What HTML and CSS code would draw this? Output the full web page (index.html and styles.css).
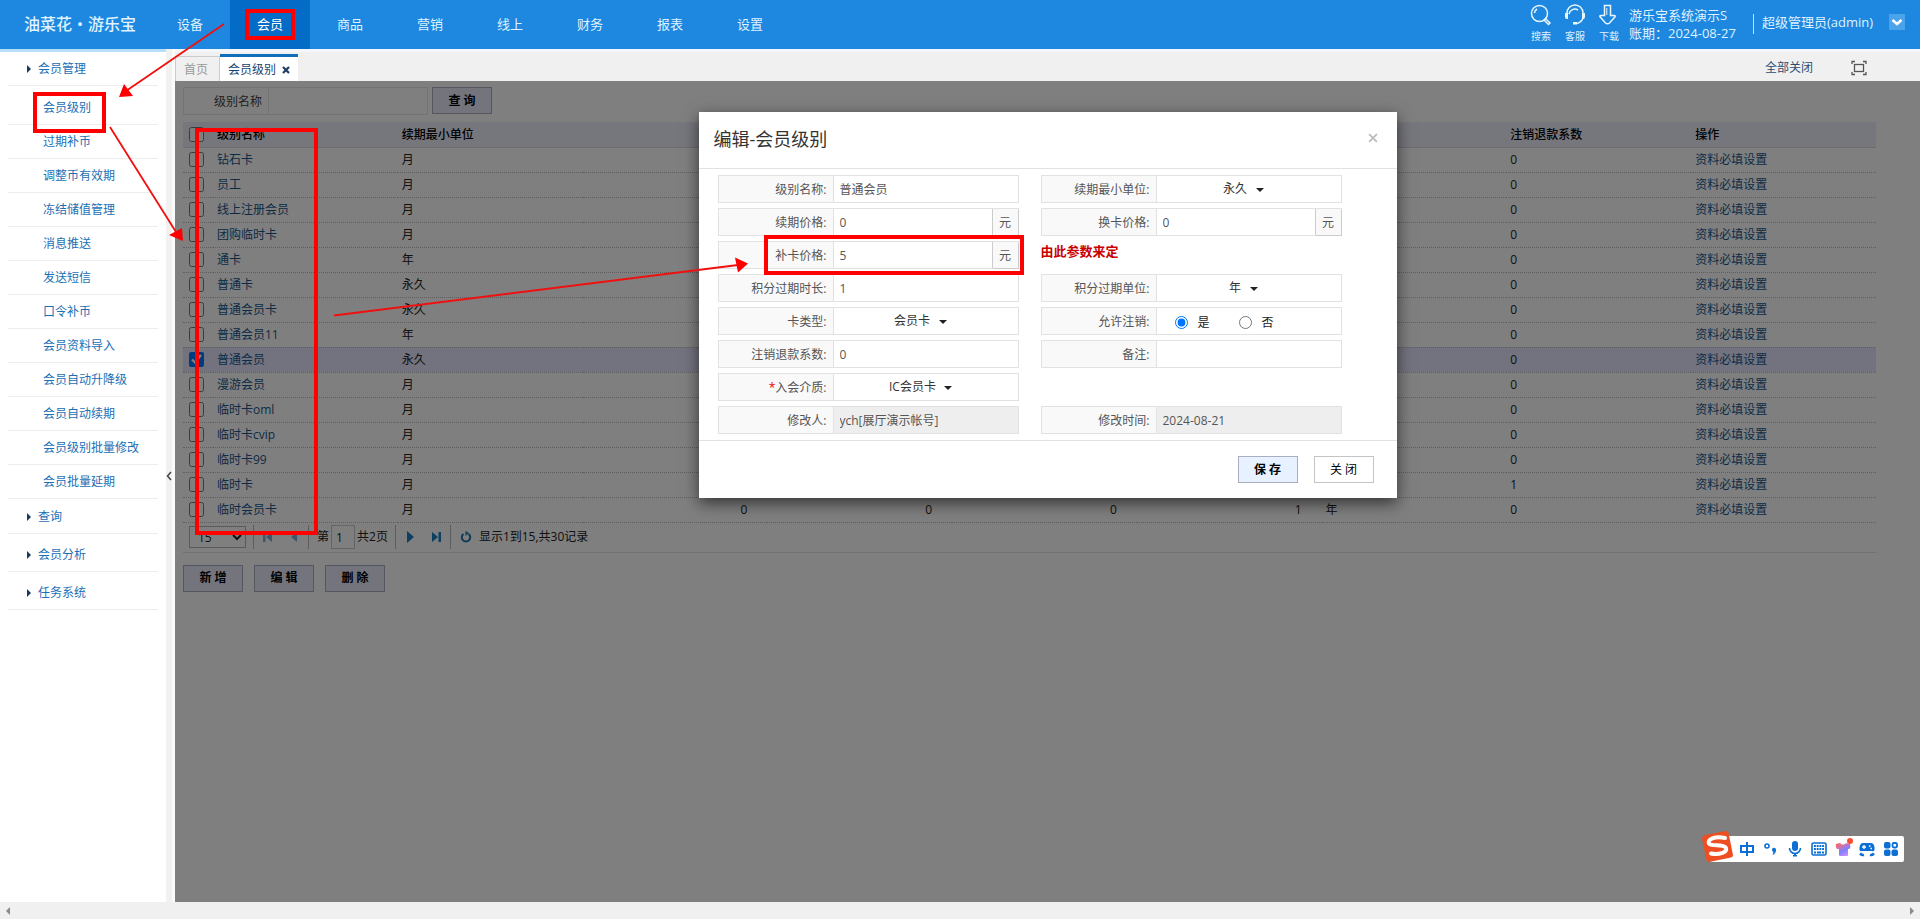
FILE: index.html
```html
<!DOCTYPE html>
<html lang="zh-CN">
<head>
<meta charset="utf-8">
<title>会员级别</title>
<link rel="stylesheet" href="styles.css">
</head>
<body>
<header class="topbar">
  <div class="logo">油菜花・游乐宝</div>
  <nav class="nav">
    <a href="#">设备</a><a href="#" class="active">会员</a><a href="#">商品</a><a href="#">营销</a><a href="#">线上</a><a href="#">财务</a><a href="#">报表</a><a href="#">设置</a>
  </nav>
  <div class="tools">
    <a href="#"><svg width="22" height="22" viewBox="0 0 22 22"><circle cx="9.500" cy="9.500" r="8"/><path d="M4.500 9a5 5 0 0 1 2.500-4M14 16l1.500-1.500 4.500 4.500-1.500 1.500z"/></svg>搜索</a>
    <a href="#"><svg width="22" height="22" viewBox="0 0 22 22"><path d="M3 9a8 8 0 0 1 16 0M19 14c-1 3-3 4.500-6 5.500M5 10a6 6 0 0 1 9-4"/><path class="solid" d="M1 9h3v6H3a2 2 0 0 1-2-2zM18 9h3v4a2 2 0 0 1-2 2h-1zM9 18h4v2.500H9z"/></svg>客服</a>
    <a href="#"><svg width="22" height="22" viewBox="0 0 22 22"><path d="M6.500 1.500h6v10h3.700q1.500 0 .8 1.300L11.500 19q-2 1.500-4 0L2 12.800q-.7-1.300.8-1.300h3.700z"/><path d="M8.800 4v7" stroke-width="1"/></svg>下载</a>
  </div>
  <div class="site"><div>游乐宝系统演示S</div><div>账期：2024-08-27</div></div>
  <div class="user">超级管理员(admin)</div>
  <button class="user-menu" aria-label="用户菜单"><svg width="12" height="8" viewBox="0 0 12 8"><path d="M1.500 2L6 6l4.500-4" fill="none" stroke="#fff" stroke-width="2.500"/></svg></button>
</header>

<div class="body">
  <aside class="sidebar">
    <a href="#" class="group">会员管理</a>
    <div class="sub">
      <a href="#">会员级别</a><a href="#">过期补币</a><a href="#">调整币有效期</a><a href="#">冻结储值管理</a><a href="#">消息推送</a><a href="#">发送短信</a><a href="#">口令补币</a><a href="#">会员资料导入</a><a href="#">会员自动升降级</a><a href="#">会员自动续期</a><a href="#">会员级别批量修改</a><a href="#">会员批量延期</a>
    </div>
    <a href="#" class="group">查询</a>
    <a href="#" class="group spaced">会员分析</a>
    <a href="#" class="group spaced">任务系统</a>
  </aside>
  <button class="splitter" aria-label="收起菜单"><svg width="6" height="10" viewBox="0 0 6 10"><path d="M5 1L1.500 5 5 9" fill="none" stroke="#444" stroke-width="1.500"/></svg></button>

  <main class="work">
    <div class="tabs">
      <a href="#" class="tab">首页</a>
      <div class="tab current">会员级别 <button aria-label="关闭标签"><svg width="8" height="8" viewBox="0 0 8 8"><path d="M1 1l6 6M7 1L1 7" stroke="#1d3f66" stroke-width="2.200"/></svg></button></div>
      <button class="close-all">全部关闭</button>
      <button class="full" aria-label="全屏"><svg width="16" height="16" viewBox="0 0 16 16" fill="none" stroke="#555" stroke-width="1.300"><path d="M1 4V1.500h3M12 1.500h3V4M15 12v2.500h-3M4 14.500H1V12"/><rect x="3.500" y="4.500" width="9" height="7"/></svg></button>
    </div>

    <section class="content">
      <div class="search">
        <label for="q">级别名称</label><input id="q" type="text"><button class="btn">查 询</button>
      </div>
      <table class="grid">
        <colgroup><col class="c-check"><col span="9"></colgroup>
        <thead><tr><th><input type="checkbox" aria-label="全选"></th><th>级别名称</th><th>续期最小单位</th><th class="n">续期价格</th><th class="n">换卡价格</th><th class="n">补卡价格</th><th class="n">积分过期时长</th><th>积分过期单位</th><th>注销退款系数</th><th>操作</th></tr></thead>
        <tbody>
          <tr><td><input type="checkbox" aria-label="钻石卡"></td><td><a href="#">钻石卡</a></td><td>月</td><td></td><td></td><td></td><td></td><td></td><td>0</td><td><a href="#">资料必填设置</a></td></tr>
          <tr><td><input type="checkbox" aria-label="员工"></td><td><a href="#">员工</a></td><td>月</td><td></td><td></td><td></td><td></td><td></td><td>0</td><td><a href="#">资料必填设置</a></td></tr>
          <tr><td><input type="checkbox" aria-label="线上注册会员"></td><td><a href="#">线上注册会员</a></td><td>月</td><td></td><td></td><td></td><td></td><td></td><td>0</td><td><a href="#">资料必填设置</a></td></tr>
          <tr><td><input type="checkbox" aria-label="团购临时卡"></td><td><a href="#">团购临时卡</a></td><td>月</td><td></td><td></td><td></td><td></td><td></td><td>0</td><td><a href="#">资料必填设置</a></td></tr>
          <tr><td><input type="checkbox" aria-label="通卡"></td><td><a href="#">通卡</a></td><td>年</td><td></td><td></td><td></td><td></td><td></td><td>0</td><td><a href="#">资料必填设置</a></td></tr>
          <tr><td><input type="checkbox" aria-label="普通卡"></td><td><a href="#">普通卡</a></td><td>永久</td><td></td><td></td><td></td><td></td><td></td><td>0</td><td><a href="#">资料必填设置</a></td></tr>
          <tr><td><input type="checkbox" aria-label="普通会员卡"></td><td><a href="#">普通会员卡</a></td><td>永久</td><td></td><td></td><td></td><td></td><td></td><td>0</td><td><a href="#">资料必填设置</a></td></tr>
          <tr><td><input type="checkbox" aria-label="普通会员11"></td><td><a href="#">普通会员11</a></td><td>年</td><td></td><td></td><td></td><td></td><td></td><td>0</td><td><a href="#">资料必填设置</a></td></tr>
          <tr class="picked"><td><input type="checkbox" aria-label="普通会员" checked></td><td><a href="#">普通会员</a></td><td>永久</td><td></td><td></td><td></td><td></td><td></td><td>0</td><td><a href="#">资料必填设置</a></td></tr>
          <tr><td><input type="checkbox" aria-label="漫游会员"></td><td><a href="#">漫游会员</a></td><td>月</td><td></td><td></td><td></td><td></td><td></td><td>0</td><td><a href="#">资料必填设置</a></td></tr>
          <tr><td><input type="checkbox" aria-label="临时卡oml"></td><td><a href="#">临时卡oml</a></td><td>月</td><td></td><td></td><td></td><td></td><td></td><td>0</td><td><a href="#">资料必填设置</a></td></tr>
          <tr><td><input type="checkbox" aria-label="临时卡cvip"></td><td><a href="#">临时卡cvip</a></td><td>月</td><td></td><td></td><td></td><td></td><td></td><td>0</td><td><a href="#">资料必填设置</a></td></tr>
          <tr><td><input type="checkbox" aria-label="临时卡99"></td><td><a href="#">临时卡99</a></td><td>月</td><td></td><td></td><td></td><td></td><td></td><td>0</td><td><a href="#">资料必填设置</a></td></tr>
          <tr><td><input type="checkbox" aria-label="临时卡"></td><td><a href="#">临时卡</a></td><td>月</td><td></td><td></td><td></td><td></td><td></td><td>1</td><td><a href="#">资料必填设置</a></td></tr>
          <tr><td><input type="checkbox" aria-label="临时会员卡"></td><td><a href="#">临时会员卡</a></td><td>月</td><td class="n">0</td><td class="n">0</td><td class="n">0</td><td class="n">1</td><td>年</td><td>0</td><td><a href="#">资料必填设置</a></td></tr>
        </tbody>
      </table>
      <div class="pager">
        <select aria-label="每页条数"><option>15</option></select>
        <div class="pg">
          <button class="off" aria-label="第一页"><svg width="10" height="12" viewBox="0 0 10 12"><path d="M0 1h2.500v10H0zM9 1v10L3 6z"/></svg></button>
          <button class="off" aria-label="上一页"><svg width="10" height="12" viewBox="0 0 10 12"><path d="M8 1v10L2 6z"/></svg></button>
        </div>
        <label class="pg page">第<input type="text" value="1">共2页</label>
        <div class="pg">
          <button aria-label="下一页"><svg width="10" height="12" viewBox="0 0 10 12"><path d="M2 0v12l7-6z"/></svg></button>
          <button aria-label="最后一页"><svg width="10" height="12" viewBox="0 0 10 12"><path d="M7.500 1H10v10H7.500zM1 1v10l6-5z"/></svg></button>
        </div>
        <div class="pg info">
          <button aria-label="刷新"><svg width="12" height="12" viewBox="0 0 12 12"><path d="M3.500 3A4.200 4.200 0 1 0 8.500 3" fill="none" stroke="#2272ab" stroke-width="2"/><path d="M5.500 0v5L9 2z"/></svg></button>
          <span>显示1到15,共30记录</span>
        </div>
      </div>
      <div class="actions"><button class="btn">新 增</button><button class="btn">编 辑</button><button class="btn">删 除</button></div>

      <div class="overlay">
        <form class="modal">
          <div class="modal-head"><h1>编辑-会员级别</h1><button type="button" aria-label="关闭"><svg width="10" height="10" viewBox="0 0 9 9"><path d="M1 1l7 7M8 1L1 8" stroke="#bbb" stroke-width="1.600"/></svg></button></div>
          <div class="fields">
            <div class="field"><label for="f1">级别名称:</label><input id="f1" type="text" value="普通会员"></div>
            <div class="field"><label for="f2">续期最小单位:</label><div class="pick"><select id="f2"><option>永久</option></select></div></div>
            <div class="field"><label for="f3">续期价格:</label><input id="f3" type="text" value="0"><span class="unit">元</span></div>
            <div class="field"><label for="f4">换卡价格:</label><input id="f4" type="text" value="0"><span class="unit">元</span></div>
            <div class="field"><label for="f5">补卡价格:</label><input id="f5" type="text" value="5"><span class="unit">元</span></div>
            <div class="note">由此参数来定</div>
            <div class="field"><label for="f6">积分过期时长:</label><input id="f6" type="text" value="1"></div>
            <div class="field"><label for="f7">积分过期单位:</label><div class="pick"><select id="f7"><option>年</option></select></div></div>
            <div class="field"><label for="f8">卡类型:</label><div class="pick"><select id="f8"><option>会员卡</option></select></div></div>
            <div class="field"><span class="cap">允许注销:</span><div class="radios"><label><input type="radio" name="cancel" checked><span>是</span></label><label><input type="radio" name="cancel"><span>否</span></label></div></div>
            <div class="field"><label for="f9">注销退款系数:</label><input id="f9" type="text" value="0"></div>
            <div class="field"><label for="f10">备注:</label><input id="f10" type="text"></div>
            <div class="field"><label for="f11"><i>*</i>入会介质:</label><div class="pick"><select id="f11"><option>IC会员卡</option></select></div></div>
            <div></div>
            <div class="field"><label for="f12">修改人:</label><input id="f12" type="text" value="ych[展厅演示帐号]" disabled></div>
            <div class="field"><label for="f13">修改时间:</label><input id="f13" type="text" value="2024-08-21" disabled></div>
          </div>
          <div class="modal-foot"><button type="button" class="btn save">保 存</button><button type="button" class="btn plain">关 闭</button></div>
        </form>
      </div>
    </section>
  </main>
</div>
<div class="hscroll"><svg width="6" height="8" viewBox="0 0 6 8"><path d="M5 0v8L1 4z"/></svg><svg width="6" height="8" viewBox="0 0 6 8"><path d="M1 0v8l4-4z"/></svg></div>

<!-- Red call-outs drawn over the page -->
<svg class="marks" viewBox="0 0 1920 919" width="1920" height="919">
  <g fill="none" stroke="#fe0000" stroke-width="4">
    <rect x="247" y="11" width="46" height="27"/>
    <rect x="35" y="94" width="69" height="37"/>
    <rect x="197" y="130" width="119" height="403"/>
    <rect x="766" y="237" width="256" height="36"/>
  </g>
  <g stroke="#f01010" stroke-width="1.800" fill="none"><path d="M224 24L126 91M110 127L176 232M334 315.500L738 265"/></g>
  <g fill="#fe0000"><path d="M119 97l5-13 9 12zM183 241l-14-6 13-7zM748 263.500l-13-6 3 15z"/></g>
</svg>

<div class="ime">
  <svg width="32" height="32" viewBox="0 0 32 32" class="sogou"><path d="M4 4L25 0q2 0 2.500 2L32 24q0 2-2 2.500L8 31q-2 0-2.500-2L1 8Q1 5 4 4z" fill="#ee4f22"/><path d="M24 7C14 5 6 8 8 12.500c2 3.500 14 0 17 4.500 1.500 5-8 7-15 5.500" fill="none" stroke="#fff" stroke-width="4" stroke-linecap="round"/></svg>
  <svg viewBox="0 0 16 16"><path d="M2 5h12v6H2zM8 1v14" fill="none" stroke="#0b6fd3" stroke-width="2"/></svg>
  <svg viewBox="0 0 16 16"><circle cx="4" cy="5" r="2" fill="none" stroke="#0b6fd3" stroke-width="1.600"/><path d="M9 8.500a2 2 0 1 1 4 .5q0 3.500-3.500 5 .3-1.200 1-3A2.300 2.300 0 0 1 9 8.500z"/></svg>
  <svg viewBox="0 0 16 16"><rect x="5" y="0" width="6" height="10" rx="3"/><path d="M2.500 7a5.500 5.500 0 0 0 11 0" fill="none" stroke="#0b6fd3" stroke-width="1.600"/><path d="M7 12h2v2h1v1.500H6V14h1z"/></svg>
  <svg viewBox="0 0 16 16"><rect x="1" y="2" width="14" height="12" rx="1.500" fill="none" stroke="#0b6fd3" stroke-width="1.600"/><path d="M3 5h10M3 8h10" stroke="#0b6fd3" stroke-width="1.800" stroke-dasharray="1.900 .8"/><path d="M3 11.500h2M6 11.500h4M11 11.500h2" stroke="#0b6fd3" stroke-width="1.800"/></svg>
  <svg viewBox="0 0 16 16"><defs><linearGradient id="shirt" x2="0.600" y2="1"><stop offset="0" stop-color="#ff604d"/><stop offset="0.300" stop-color="#e0709a"/><stop offset="0.650" stop-color="#7d80ff"/><stop offset="1" stop-color="#c08cff"/></linearGradient></defs><path d="M1 3l4-1q3 3 6 0l4 1q1 3-.5 5H13v6q0 1-1 1H5q-1 0-1-1V8H2Q0 6 1 3z" fill="url(#shirt)"/><circle cx="15" cy="0" r="3" fill="#fb4b2e"/></svg>
  <svg viewBox="0 0 16 16"><path d="M4 2h8q3 0 3.500 4.500Q16 11 13 10H3Q0 11 .5 6.500 1 2 4 2z"/><path d="M3 6h4M5 4v4M10 5h1.500M11.500 7.500H13" stroke="#fff" stroke-width="1.300"/><path d="M1 12.500q2 2 4 1.500M15 12.500q-2 2-4 1.500" fill="none" stroke="#0b6fd3" stroke-width="2.500"/></svg>
  <svg viewBox="0 0 16 16"><rect x="1" y="1" width="6.500" height="6.500" rx="2"/><rect x="1" y="8.500" width="6.500" height="6.500" rx="2"/><rect x="8.500" y="8.500" width="6.500" height="6.500" rx="2"/><rect x="9.500" y="2" width="4.500" height="4.500" rx="1.500" fill="none" stroke="#0b6fd3" stroke-width="1.800"/></svg>
</div>
</body>
</html>
```
FILE: styles.css
```css
* { box-sizing: border-box; }
body {
  margin: 0;
  min-height: 100vh;
  display: flex;
  flex-direction: column;
  font: 12px/16px "Open Sans", "Noto Sans CJK SC", sans-serif;
  color: #222;
  background: #fff;
  overflow: hidden;
}
a { color: #1b6fb5; text-decoration: none; }
button, input, select { font: inherit; color: inherit; }
button { border: 0; padding: 0; background: none; cursor: pointer; }

.topbar { display: flex; height: 49px; background: #1e88e0; color: #dff2ff; font-size: 13px; padding-right: 15px; }
.logo { width: 150px; padding-left: 24px; font-size: 16px; line-height: 48px; font-weight: 500; white-space: nowrap; }
.nav { display: flex; flex: 1; }
.nav a { width: 80px; text-align: center; line-height: 48px; color: #dff2ff; }
.nav a.active { background: #046bc6; color: #fff; }
.tools { display: flex; gap: 14px; padding-top: 4px; }
.tools a { display: flex; flex-direction: column; align-items: center; width: 20px; color: #dff2ff; font-size: 10px; line-height: 20px; white-space: nowrap; }
.tools svg { fill: none; stroke: #e8f6ff; stroke-width: 1.500; flex: none; }
.tools .solid { fill: #e8f6ff; stroke: none; }
.site { padding: 6px 0 0 10px; line-height: 18px; width: 134px; white-space: nowrap; }
.user { align-self: flex-start; margin-top: 14px; height: 20px; line-height: 16px; padding-left: 8px; width: 136px; border-left: 1px solid #bfe0fa; white-space: nowrap; }
.user-menu { width: 16px; height: 16px; margin-top: 14px; background: #4ba3ea; display: grid; place-items: center; }

.body { flex: 1; display: flex; }
.sidebar { width: 166px; border-top: 3px solid #b8dff8; padding: 0 8px; background: #fff; }
.sidebar a { display: block; height: 34px; line-height: 33px; border-bottom: 1px solid #ededed; padding-left: 35px; }
.sidebar .group { position: relative; padding-left: 30px; }
.sidebar .group::before { content: ""; position: absolute; left: 19px; top: 13px; border: 4px solid transparent; border-left-color: #173a5c; border-right: 0; }
.sub { padding: 5px 0 1px; }
.spaced { margin-top: 4px; }
.splitter { width: 9px; background: #f1f1f1; border-right: 3px solid #fbfbfb; display: grid; place-items: center; }

.work { flex: 1; display: flex; flex-direction: column; min-width: 0; }
.tabs { display: flex; align-items: flex-end; height: 32px; background: #f0f0f0; border-top: 3px solid #f3f7fb; padding-right: 53px; }
.tab { height: 25px; line-height: 26px; padding: 0 11px 0 8px; border: 1px solid #ccc; border-bottom: 0; color: #999; background: #f0f0f0; width: 45px; }
.tab.current { width: 78px; height: 27px; border: 0; border-top: 3px solid #0f6fba; background: #fff; color: #16446f; display: flex; align-items: center; gap: 6px; padding: 2px 8px 0; white-space: nowrap; }
.tab button { display: flex; }
.close-all { margin: 0 38px 0 auto; height: 27px; color: #2c4b70; }
.full { height: 27px; display: flex; align-items: center; }

.content { flex: 1; position: relative; padding: 6px 44px 0 8px; }
.search { display: flex; }
.search label { width: 86px; line-height: 27px; height: 28px; text-align: right; padding-right: 6px; border: 1px solid #e6e6e6; color: #444; }
.search input { width: 159px; height: 28px; border: 1px solid #e6e6e6; border-left: 0; background: #fff; }
.search .btn { margin-left: 4px; }
.btn { width: 60px; height: 27px; border: 1px solid #a9afc0; background: #e6e9f9; color: #000; font-weight: bold; }

.grid { width: 100%; margin-top: 7px; border-collapse: collapse; table-layout: fixed; }
.c-check { width: 30px; }
.grid th, .grid td { height: 25px; padding: 0 4px; text-align: left; border-bottom: 1px dotted #bdbdbd; white-space: nowrap; }
.grid th { padding-top: 2px; background: #edeefa; font-weight: 500; color: #000; border-bottom: 1px solid #d8d8dc; }
.grid .n { text-align: right; padding-right: 20px; }
.grid th:first-child, .grid td:first-child { padding: 0 0 0 6px; }
.grid input { display: block; width: 15px; height: 15px; margin: 0; }
.grid a { color: #1c568c; }
.picked td { background: #e6e6ff; }

.pager { display: flex; align-items: center; height: 30px; padding-left: 6px; border-bottom: 1px solid #e3e3e3; }
.pager select { width: 57px; height: 22px; border: 1px solid #b5b5b5; background: #fff; border-radius: 0; padding: 0 4px; margin-right: 7px; }
.pg { display: flex; align-items: center; height: 24px; border-left: 1px solid #b8b8b8; gap: 16px; padding: 0 9px; }
.pg button { display: flex; }
.pg svg { fill: #1d7fc0; }
.pg .off svg { fill: #7ab0da; }
.pg.page { gap: 2px; padding: 0 7px 0 8px; }
.page input { width: 24px; height: 24px; border: 1px solid #c8c8c8; padding: 0 4px; }
.pg.info { gap: 7px; white-space: nowrap; }
.actions { display: flex; gap: 11px; margin-top: 12px; }

.overlay { position: absolute; inset: 0; background: rgba(0, 0, 0, .5); display: flex; justify-content: center; align-items: flex-start; padding-top: 31px; }
.modal { width: 698px; background: #fff; box-shadow: 0 5px 15px rgba(0, 0, 0, .6); }
.modal-head { height: 57px; display: flex; align-items: center; justify-content: space-between; padding: 0 19px 2px 15px; border-bottom: 1px solid #e2e2e2; }
.modal-head h1 { margin: 0; font-size: 18px; font-weight: 400; line-height: 24px; color: #333; }
.fields { display: grid; grid-template-columns: 301px 301px; gap: 5px 22px; padding: 6px 19px; }
.field { display: flex; height: 28px; border: 1px solid #e2e2e2; color: #555; }
.field > label, .cap { width: 115px; flex: none; text-align: right; line-height: 28px; padding-right: 6px; background: #f9f9f9; border-right: 1px solid #e2e2e2; }
.field i { color: #e00; font-style: normal; }
.field > input { flex: 1; min-width: 0; border: 0; padding: 2px 6px 0; background: #fff; color: #555; }
.field > input:disabled { background: #eee; }
.unit { width: 26px; text-align: center; line-height: 28px; background: #f9f9f9; border-left: 1px solid #ccc; box-shadow: 1px 1px 0 #ccc; }
.pick { flex: 1; display: flex; justify-content: center; padding-right: 10px; }
.pick select {
  appearance: none; border: 0; padding: 0 16px 0 0; color: #333;
  background: url("data:image/svg+xml,%3Csvg xmlns='http://www.w3.org/2000/svg' width='8' height='4'%3E%3Cpath d='M0 0h8L4 4z' fill='%23222'/%3E%3C/svg%3E") no-repeat right 12px;
}
.radios { flex: 1; display: flex; align-items: center; gap: 29px; padding-left: 18px; color: #222; }
.radios label { display: flex; align-items: center; gap: 10px; }
.radios span { padding-top: 4px; }
.radios input { width: 13px; height: 13px; margin: 2px 0 0; }
.note { color: #c90000; font-size: 13px; font-weight: bold; line-height: 20px; }
.modal-foot { height: 58px; border-top: 1px solid #e2e2e2; display: flex; justify-content: flex-end; gap: 16px; padding: 15px 23px; }
.save { background: #e8f1ff; }
.plain { background: #fff; font-weight: 400; border-color: #c4c4c4; }

.hscroll { height: 17px; background: #f0f0f0; display: flex; justify-content: space-between; align-items: center; padding: 0 5px; }
.hscroll svg { fill: #8b8b8b; }

.marks { position: absolute; left: 0; top: 0; pointer-events: none; }
.ime { position: absolute; right: 16px; bottom: 57px; height: 26px; background: #fff; border-radius: 2px; display: flex; align-items: center; gap: 8px; padding-right: 5px; }
.ime svg { width: 16px; height: 16px; fill: #0b6fd3; overflow: visible; }
.ime .sogou { width: 32px; height: 32px; margin: -4px -2px 0 -9px; }
```
